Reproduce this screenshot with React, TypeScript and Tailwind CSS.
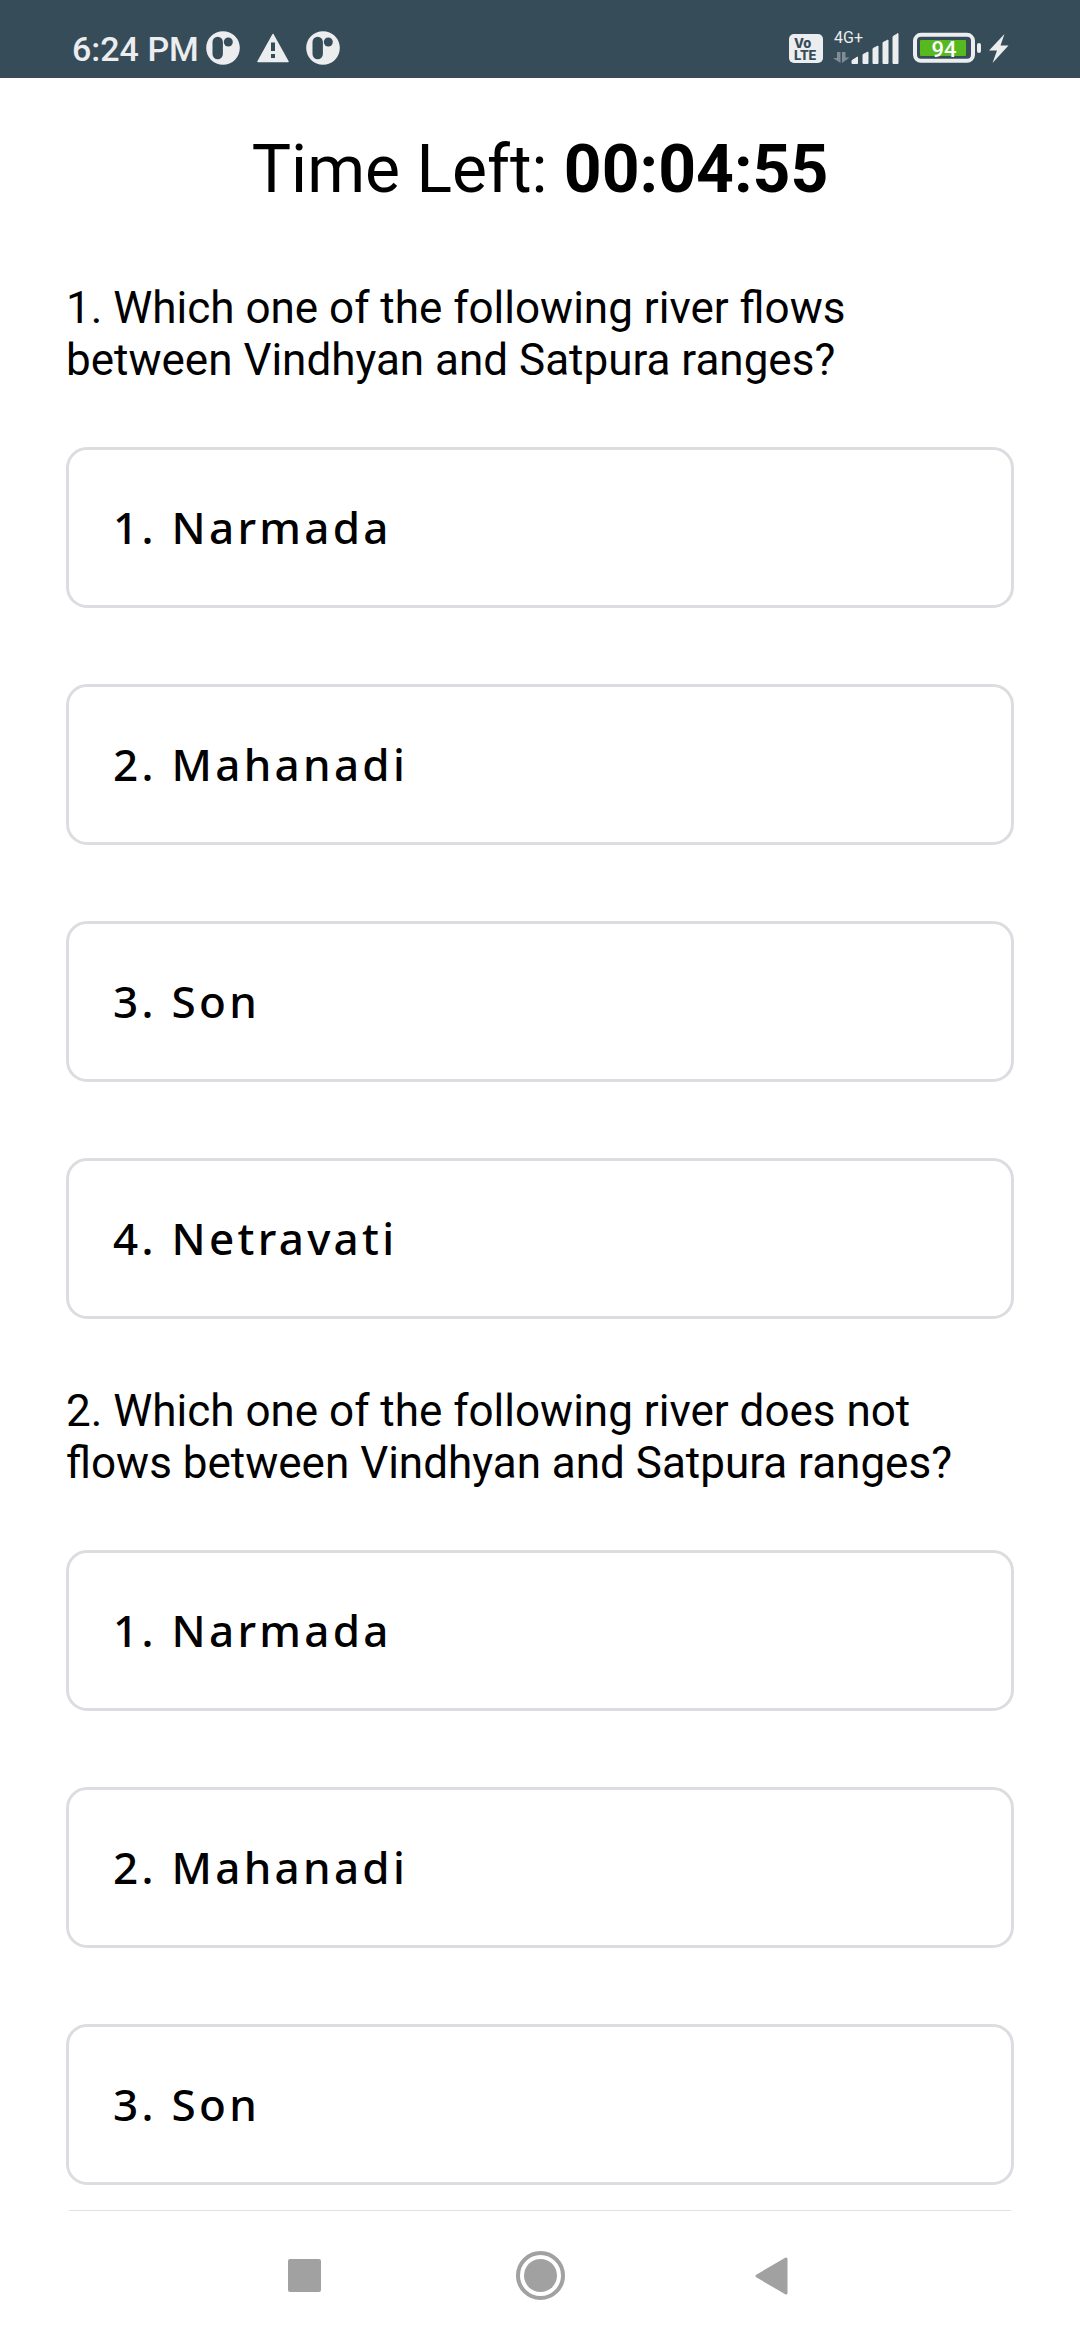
const options = ["Narmada", "Mahanadi", "Son", "Netravati"];

function AppBadge() {
  return (
    <svg className="h-[34px] w-[34px]" viewBox="0 0 34 34">
      <circle cx="17" cy="17" r="16.8" fill="#ebedef" />
      <rect x="6.5" y="5.8" width="10.4" height="22.4" rx="5.2" fill="#364c59" />
      <circle cx="22.3" cy="11" r="4.5" fill="#364c59" />
    </svg>
  );
}

function StatusBar() {
  return (
    <header className="flex h-[78px] shrink-0 items-start bg-[#364c59] pl-[72px] pt-[31px] text-[#ebedef]">
      <span className="mt-[1px] w-[134px] whitespace-nowrap text-[34px] leading-[34px] font-medium">6:24 PM</span>
      <AppBadge />
      <svg className="ml-[16px] h-[34px] w-[34px]" viewBox="0 0 34 34">
        <path d="M17 3.5 32 30.500H2Z" fill="#ebedef" stroke="#ebedef" strokeWidth="1.500" strokeLinejoin="round" />
        <path d="M15 11.500h4v8.500h-4zM15 23h4v4h-4z" fill="#364c59" />
      </svg>
      <span className="ml-[16px]"><AppBadge /></span>
      <div className="ml-[449px] mt-[3px] flex h-[29px] w-[34px] flex-col items-start rounded-[5px] bg-[#ebedef] pt-[3px] pl-[5px] font-[Inter,sans-serif] text-[13px] leading-[12px] font-extrabold text-[#364c59]">
        <span>Vo</span>
        <span className="tracking-[-0.300px]">LTE</span>
      </div>
      <div className="relative ml-[10px] h-[34px] w-[68px]">
        <span className="absolute left-[1px] -top-[1px] text-[16px] leading-[16px]">4G+</span>
        <svg className="h-[34px] w-[68px]" viewBox="0 0 68 34">
          <path d="M4 21h3.500v11L0 27h4zM9 32V21h3.500v5.500h4z" fill="#7f8d96" />
          <path d="M19 29.500l5.500-3.500v6.500h-5.500zM30 23.500l5-2.500v11.500h-5zM40 17.500l5-2.500v17.500h-5zM50 11.500l5-2.500v23.500h-5zM60 5.500l5-3v30h-5z" fill="#ebedef" stroke="#ebedef" strokeWidth="1" strokeLinejoin="round" />
        </svg>
      </div>
      <svg className="ml-[12px] h-[34px] w-[96px]" viewBox="0 0 96 34">
        <rect x="2" y="3.800" width="58" height="26" rx="6" fill="none" stroke="#ebedef" strokeWidth="4" />
        <rect x="7" y="9" width="46" height="16" rx="1" fill="#56b920" />
        <rect x="64" y="12" width="4" height="10" rx="2" fill="#ebedef" />
        <path d="M91.500 3 76 19.500h8L79.500 32 95.500 14.500h-8z" fill="#ebedef" />
        <text x="31" y="25.500" textAnchor="middle" fontSize="22" fontWeight="500" fill="#fff">94</text>
      </svg>
    </header>
  );
}

function Question({ lines, count }: { lines: string[]; count: number }) {
  return (
    <section>
      <h2 className="text-[44px] leading-[52px]">
        {lines.map((line) => (
          <span key={line} className="block whitespace-nowrap">{line}</span>
        ))}
      </h2>
      <div className="mt-[61px] flex flex-col gap-[76px]">
        {options.slice(0, count).map((option, index) => (
          <button
            key={option}
            className="flex h-[161px] items-center rounded-[21px] border-[3px] border-[#dcdce1] pb-[2px] pl-[44px] text-left font-['Noto_Sans',sans-serif] text-[44px] leading-[60px] font-medium tracking-[3.3px]"
          >
            {index + 1}. {option}
          </button>
        ))}
      </div>
    </section>
  );
}

function NavigationBar() {
  return (
    <nav className="mt-[40px] flex items-center">
      <span className="ml-[287.5px] h-[33px] w-[33px] rounded-[2px] bg-[#a1a1a1]" />
      <span className="ml-[195.5px] flex h-[49px] w-[49px] items-center justify-center rounded-full border-[4px] border-[#a1a1a1]">
        <span className="h-[33px] w-[33px] rounded-full bg-[#a1a1a1]" />
      </span>
      <svg className="ml-[190px] h-[38px] w-[33px]" viewBox="0 0 33 38">
        <path d="M2 19 31 2v34z" fill="#a1a1a1" stroke="#a1a1a1" strokeWidth="3" strokeLinejoin="round" />
      </svg>
    </nav>
  );
}

export default function App() {
  return (
    <div className="flex h-[2340px] w-[1080px] flex-col overflow-hidden bg-white font-[Roboto,sans-serif] text-black">
      <StatusBar />
      <main className="flex flex-col px-[66px]">
        <h1 className="mt-[53px] text-center text-[66px] leading-[78px] font-normal whitespace-nowrap">
          Time Left: <b className="font-bold">00:04:55</b>
        </h1>
        <div className="mt-[73px] flex flex-col gap-[66px]">
          <Question lines={["1. Which one of the following river flows", "between Vindhyan and Satpura ranges?"]} count={4} />
          <Question lines={["2. Which one of the following river does not", "flows between Vindhyan and Satpura ranges?"]} count={3} />
        </div>
        <hr className="mx-[3px] mt-[25px] border-t border-[#e1e1e1]" />
      </main>
      <NavigationBar />
    </div>
  );
}
